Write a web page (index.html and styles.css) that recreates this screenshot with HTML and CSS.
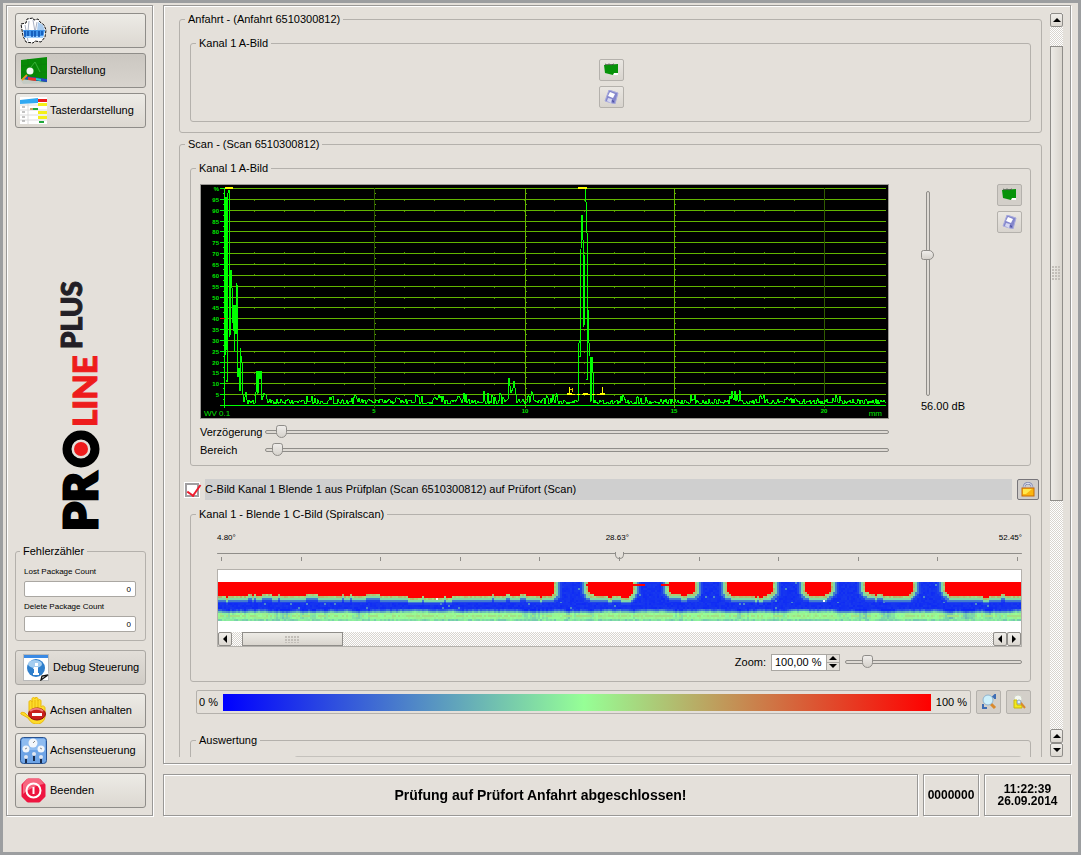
FILE: index.html
```html
<!DOCTYPE html>
<html lang="de">
<head>
    <meta charset="UTF-8">
    <meta name="viewport" content="width=device-width, initial-scale=1.0">
    <title>PROLINE PLUS</title>
    <link rel="stylesheet" href="styles.css">
</head>
<body>
    <div class="window">
        <aside class="sidebar">
            <button class="nav-btn">
                <svg width="27" height="27" viewBox="0 0 27 27">
                    <path d="M1 7l5-1 1-4 6-1 1 2 4-1 2 3 4 3 2 5-1 7-4 5-6-1-2 2-7-1-3-6-1-6z" fill="#fff" stroke="#111" stroke-dasharray="3 1"/>
                    <path d="M5 8l3 16M9 4l-1 10M13 3l3 18M17 5l-3 16" stroke="#a9b1c2" fill="none"/>
                    <path d="M18 5l5 3 2 6h-8z" fill="#a9cbee"/>
                    <path d="M3 13h22l-2 8H5z" fill="#3f94ea"/>
                    <path d="M4 20h19" stroke="#9fd0ff" stroke-width="2"/>
                    <path d="M5 14v6M8 14v5M12 14v6M15 14v6M19 14v6M22 14v4" stroke="#0b4fb0" stroke-width="1.500"/>
                </svg>
                Prüforte
            </button>
            <button class="nav-btn active">
                <svg width="27" height="27" viewBox="0 0 27 27">
                    <path d="M1 3L27 0V26L3 27 1 24z" fill="#c4cbc4"/>
                    <path d="M1 3L27 0V25L1 22z" fill="#078a07"/>
                    <path d="M1 9L27 7M1 15h26M8 2v20M15 2v21M21 1v23" stroke="#0a800a" fill="none"/>
                    <path d="M11 10l4-5 5 10" stroke="#39b339" fill="none"/>
                    <path d="M5 19l22 3v3L5 22z" fill="#2447c8"/>
                    <path d="M8 20l8 1v3l-8-1z" fill="#e33"/>
                    <path d="M16 21l5 1v2l-5-1z" fill="#2bd3c3"/>
                    <circle cx="10" cy="14" r="3.500" fill="#f1f7f1"/>
                    <path d="M7 18l-5 5" stroke="#e8922a" stroke-width="2"/>
                </svg>
                Darstellung
            </button>
            <button class="nav-btn">
                <svg width="27" height="27" viewBox="0 0 27 27">
                    <path d="M0 0h27v27H0z" fill="#fff"/>
                    <path d="M0 8h18M0 13h27M0 18h27M0 23h27M8 7v20" stroke="#dcdcdc"/>
                    <path d="M0 3l18-2v5L0 7z" fill="#31a9f2"/>
                    <path d="M18 2h9v3h-9z" fill="#ed1c1c"/>
                    <path d="M18 6h9v3h-9zM18 14h9v3h-9zM18 19h9v3h-9z" fill="#f4f01a"/>
                    <path d="M10 11h3v2h-3z" fill="#c9a56a"/>
                    <path d="M13 11h5v2h-5zM19 24h5v2h-5z" fill="#1fa83a"/>
                    <path d="M2 10h3M2 15h3M2 20h3M2 24h3" stroke="#888"/>
                </svg>
                Tasterdarstellung
            </button>

            <div class="brand">
                <svg width="80" height="260" viewBox="-20 0 80 260" role="img" aria-label="PROLINE PLUS">
                    <text class="brand-pr" transform="translate(36 255) rotate(-90)">PR</text>
                    <circle cx="20" cy="173" r="14" fill="none" stroke="#000" stroke-width="9"/>
                    <circle cx="20" cy="173" r="7" fill="#ee1c1c"/>
                    <text class="brand-line" transform="translate(36 151) rotate(-90)">LINE</text>
                    <text class="brand-plus" transform="translate(21 73) rotate(-90)">PLUS</text>
                </svg>
            </div>

            <fieldset class="counters">
                <legend>Fehlerzähler</legend>
                <label for="lost">Lost Package Count</label>
                <input type="text" id="lost" value="0">
                <label for="deleted">Delete Package Count</label>
                <input type="text" id="deleted" value="0">
            </fieldset>

            <button class="nav-btn debug">
                <svg width="27" height="27" viewBox="0 0 27 27">
                    <path d="M0 0h26v27H0z" fill="#b9b9b9"/>
                    <path d="M1 1h24v25H1z" fill="#fff"/>
                    <path d="M1 1h24v3H1z" fill="#3b8ae4"/>
                    <circle cx="13" cy="14" r="9" fill="#2f7fcc"/>
                    <ellipse cx="12" cy="10" rx="7" ry="4" fill="#a4cdf0"/>
                    <path d="M11 13h4v6h1v2h-6v-2h1v-4h-1zM12 9h3v3h-3z" fill="#fff"/>
                    <path d="M17 27l1-6 8-2z" fill="#fff"/>
                    <path d="M18 26l1-4 6-1z" fill="#eee" stroke="#111" stroke-width="1.300"/>
                </svg>
                Debug Steuerung
            </button>
            <button class="nav-btn">
                <svg width="27" height="27" viewBox="0 0 27 27">
                    <path d="M9 15V5c0-2 3-2 3 0V2c0-2 3-2 3 0v-1c0-1 3-1 3 1v2c0-2 3-2 3 0v6c1-2 4-1 4 1v8c0 5-4 8-8 8-5 0-7-3-9-6L1 17c-1-2 2-2 4-1l4 4z" fill="#fddc2b" stroke="#eab90c"/>
                    <path d="M12 4v8M15 3v9M18 4v8" stroke="#eab90c"/>
                    <ellipse cx="17" cy="17" rx="8.500" ry="6" fill="#c9201c" stroke="#8c0f0d"/>
                    <path d="M10 14c3-3 10-3 13 0" stroke="#f0817c" stroke-width="2" fill="none"/>
                    <path d="M12 16h10v3H12z" fill="#fff"/>
                </svg>
                Achsen anhalten
            </button>
            <button class="nav-btn">
                <svg width="27" height="27" viewBox="0 0 27 27">
                    <rect x="0.500" y="0.500" width="26" height="26" rx="3" fill="#6ea4e6" stroke="#29528f"/>
                    <path d="M2 2h23v11H2z" fill="#8fbcf0"/>
                    <circle cx="13" cy="6" r="4.500" fill="#f2f6fb"/>
                    <circle cx="6" cy="12" r="3.500" fill="#f2f6fb"/>
                    <circle cx="21" cy="12" r="3.500" fill="#f2f6fb"/>
                    <path d="M5 12l2-1M13 6l2-2M20 11l2 1" stroke="#888"/>
                    <path d="M6 20v6M14 17v7M21 20v6" stroke="#1b2c4c" stroke-width="2"/>
                    <circle cx="6" cy="20" r="2" fill="#dfe7f2"/>
                    <circle cx="14" cy="17" r="2" fill="#dfe7f2"/>
                    <circle cx="21" cy="20" r="2" fill="#dfe7f2"/>
                </svg>
                Achsensteuerung
            </button>
            <button class="nav-btn">
                <svg width="27" height="27" viewBox="0 0 27 27">
                    <path d="M8 3h11l5 5v11l-5 5H8l-5-5V8z" fill="#ee1540" stroke="#ee1540" stroke-width="3" stroke-linejoin="round"/>
                    <path d="M7 2h13l4 5c-7 1-15 5-21 10V7z" fill="#f7667f"/>
                    <circle cx="13.500" cy="13.500" r="7" fill="none" stroke="#fff" stroke-width="2"/>
                    <path d="M13.500 10v7" stroke="#fff" stroke-width="2"/>
                </svg>
                Beenden
            </button>
        </aside>

        <main class="main">
            <div class="panel">
                <div class="view">
                    <fieldset class="group">
                        <legend>Anfahrt - (Anfahrt 6510300812)</legend>
                        <fieldset class="inner">
                            <legend>Kanal 1 A-Bild</legend>
                            <div class="tools center">
                                <button class="tool" aria-label="A-Bild anzeigen">
                                    <svg width="15" height="14" viewBox="0 0 15 14">
                                        <path d="M0 2L14 1V10L9 12 1 10z" fill="#07930a"/>
                                        <path d="M1 1l2 1 2-1 2 1 3-1" stroke="#4c5b4c" fill="none"/>
                                        <path d="M10 10l4 0v2h-5z" fill="#fff"/>
                                    </svg>
                                </button>
                                <button class="tool" aria-label="Speichern">
                                    <svg width="15" height="14" viewBox="0 0 15 14">
                                        <path d="M5 0l9 3-3 11-10-3z" fill="#8487cc" stroke="#a9abdc"/>
                                        <path d="M6 2l5 2-2 4-5-2z" fill="#fff"/>
                                        <path d="M4 8l4 1-1 4-4-2z" fill="#d5d7f1"/>
                                        <path d="M8 10l2 1-1 2z" fill="#3f4298"/>
                                    </svg>
                                </button>
                            </div>
                        </fieldset>
                    </fieldset>

                    <fieldset class="group">
                        <legend>Scan - (Scan 6510300812)</legend>
                        <fieldset class="inner">
                            <legend>Kanal 1 A-Bild</legend>
                            <div class="ascan-row">
                                <div class="ascan-col">
                                    <svg class="ascan" id="ascan" viewBox="0 0 687 233" preserveAspectRatio="none" role="img" aria-label="A-Bild"></svg>
                                    <div class="slider-row">
                                        <label for="delay">Verzögerung</label>
                                        <input type="range" id="delay" min="0" max="1000" value="17">
                                    </div>
                                    <div class="slider-row">
                                        <label for="area">Bereich</label>
                                        <input type="range" id="area" min="0" max="1000" value="10">
                                    </div>
                                </div>
                                <div class="gain">
                                    <input type="range" class="vertical" id="gain" min="0" max="100" value="30">
                                    <label for="gain">56.00 dB</label>
                                </div>
                                <div class="tools">
                                    <button class="tool pressed" aria-label="A-Bild anzeigen">
                                        <svg width="15" height="14" viewBox="0 0 15 14">
                                            <path d="M0 2L14 1V10L9 12 1 10z" fill="#07930a"/>
                                            <path d="M1 1l2 1 2-1 2 1 3-1" stroke="#4c5b4c" fill="none"/>
                                            <path d="M10 10l4 0v2h-5z" fill="#fff"/>
                                        </svg>
                                    </button>
                                    <button class="tool" aria-label="Speichern">
                                        <svg width="15" height="14" viewBox="0 0 15 14">
                                            <path d="M5 0l9 3-3 11-10-3z" fill="#8487cc" stroke="#a9abdc"/>
                                            <path d="M6 2l5 2-2 4-5-2z" fill="#fff"/>
                                            <path d="M4 8l4 1-1 4-4-2z" fill="#d5d7f1"/>
                                            <path d="M8 10l2 1-1 2z" fill="#3f4298"/>
                                        </svg>
                                    </button>
                                </div>
                            </div>
                        </fieldset>

                        <div class="check-row">
                            <input type="checkbox" id="cbild" checked>
                            <label for="cbild">C-Bild Kanal 1 Blende 1 aus Prüfplan (Scan 6510300812) auf Prüfort (Scan)</label>
                            <button class="tool lock" aria-label="Sperren">
                                <svg width="14" height="15" viewBox="0 0 14 15">
                                    <path d="M3 8V5c0-5 8-5 8 0v3" fill="none" stroke="#7f87ad" stroke-width="2.500"/>
                                    <path d="M3 8V5c0-5 8-5 8 0v3" fill="none" stroke="#eef0fa"/>
                                    <rect x="1" y="6" width="12" height="8" fill="#fbb50f" stroke="#c56a06"/>
                                    <path d="M2 7h9l-6 5H2z" fill="#ffe94d"/>
                                </svg>
                            </button>
                        </div>

                        <fieldset class="inner cscan">
                            <legend>Kanal 1 - Blende 1 C-Bild (Spiralscan)</legend>
                            <div class="degrees">
                                <span>4.80°</span>
                                <span>28.63°</span>
                                <span>52.45°</span>
                            </div>
                            <input type="range" class="ruler" min="0" max="100" value="50" aria-label="Winkel">
                            <div class="ticks">
                                <i></i><i></i><i></i><i></i><i></i><i></i><i></i><i></i><i></i><i></i><i></i>
                            </div>
                            <div class="strip">
                                <canvas id="cscan" width="402" height="20"></canvas>
                                <div class="hscroll">
                                    <button aria-label="Links"><b class="arrow left"></b></button>
                                    <div class="hthumb"><span class="grip"></span></div>
                                    <button aria-label="Links"><b class="arrow left"></b></button>
                                    <button aria-label="Rechts"><b class="arrow right"></b></button>
                                </div>
                            </div>
                            <div class="zoom-row">
                                <label for="zoom">Zoom:</label>
                                <div class="spin">
                                    <input type="text" id="zoom" value="100,00 %">
                                    <div class="spin-btns">
                                        <button aria-label="Mehr"><b class="arrow up"></b></button>
                                        <button aria-label="Weniger"><b class="arrow down"></b></button>
                                    </div>
                                </div>
                                <input type="range" class="zoom-range" min="0" max="100" value="10" aria-label="Zoom">
                            </div>
                        </fieldset>

                        <div class="scale-row">
                            <div class="scale">
                                <span>0 %</span>
                                <div class="gradient"></div>
                                <span>100 %</span>
                            </div>
                            <button class="tool pressed" aria-label="Suchen">
                                <svg width="16" height="16" viewBox="0 0 16 16">
                                    <path d="M9 9l5 5" stroke="#d98a2e" stroke-width="3"/>
                                    <path d="M11 4l3-3v4M2 10v4h4" stroke="#3e6db4" stroke-width="2" fill="none"/>
                                    <circle cx="7" cy="6" r="5" fill="#cdf0fb" stroke="#8fb4cf"/>
                                </svg>
                            </button>
                            <button class="tool pressed" aria-label="Bereich suchen">
                                <svg width="16" height="16" viewBox="0 0 16 16">
                                    <circle cx="7" cy="5" r="4" fill="#f3f7f0" stroke="#d0d3c8"/>
                                    <path d="M3 6h3v5h5v3H3z" fill="#f3ea1c" stroke="#c9b90f"/>
                                    <path d="M9 8l5 6" stroke="#d98a2e" stroke-width="2"/>
                                    <circle cx="8" cy="8" r="2" fill="#dcefff" stroke="#8fa9bf"/>
                                </svg>
                            </button>
                        </div>

                        <fieldset class="inner result">
                            <legend>Auswertung</legend>
                            <div class="result-box"></div>
                        </fieldset>
                    </fieldset>
                </div>

                <div class="vscroll">
                    <button aria-label="Nach oben"><b class="arrow up"></b></button>
                    <div class="vthumb"><span class="grip tall"></span></div>
                    <button aria-label="Nach oben"><b class="arrow up"></b></button>
                    <button aria-label="Nach unten"><b class="arrow down"></b></button>
                </div>
            </div>

            <footer class="status">
                <div class="message">Prüfung auf Prüfort Anfahrt abgeschlossen!</div>
                <div class="code">0000000</div>
                <div class="clock">11:22:39<br>26.09.2014</div>
            </footer>
        </main>
    </div>
    <script src="script.js"></script>
</body>
</html>
```

FILE: styles.css
```css
* {
    box-sizing: border-box;
}

body {
    margin: 0;
    background-color: #e4e0da;
    font-family: "Liberation Sans", Arial, sans-serif;
    font-size: 11px;
    line-height: 13px;
    color: #000;
}

button, input {
    font: inherit;
    color: inherit;
    margin: 0;
}

svg {
    display: block;
}

.window {
    display: flex;
    gap: 10px;
    height: 100vh;
    border: 3px solid #9c9ea0;
    padding: 2px 7px 36px 3px;
}

/* Eingefasste Rahmen */
.sidebar, .panel, .status div {
    border: 1px solid #999896;
    box-shadow: 1px 1px 0 #fff, inset 1px 1px 0 #fff;
}

fieldset {
    min-width: 0;
    margin: 0;
    border: 1px solid #b4b1ac;
    border-radius: 3px;
}

legend {
    margin-left: -5px;
    padding: 0 3px;
}

/* Seitenleiste */
.sidebar {
    flex: 0 0 147px;
    display: flex;
    flex-direction: column;
    gap: 5px;
    padding: 7px 6px 7px 8px;
}

.nav-btn {
    flex: none;
    display: flex;
    align-items: center;
    gap: 3px;
    height: 35px;
    padding: 0 4px;
    border: 1px solid #8f8d89;
    border-radius: 3px;
    background: linear-gradient(#edebe6, #dcd8d1);
    white-space: nowrap;
}

.nav-btn.active {
    background: linear-gradient(#cbc7c1, #d8d4ce);
}

.nav-btn.debug {
    padding-left: 7px;
    margin-bottom: 3px;
    border-color: #aaa7a2;
    background: linear-gradient(#e2ded8, #d0ccc6);
}

.brand {
    flex: 1;
    min-height: 0;
    display: flex;
    align-items: flex-end;
    justify-content: center;
    padding-bottom: 4px;
}

.brand text {
    font-family: Lato, sans-serif;
    font-weight: 900;
}

.brand .brand-pr {
    font-size: 46px;
    stroke: #000;
    stroke-width: 3px;
}

.brand .brand-line {
    font-size: 33px;
    fill: #ee1c1c;
    stroke: #ee1c1c;
    stroke-width: 1px;
}

.brand .brand-plus {
    font-size: 28px;
    fill: #231f26;
    stroke: #231f26;
    stroke-width: 1px;
}

.counters {
    margin-bottom: 4px;
    padding: 9px 9px 1px 8px;
    font-size: 8px;
    line-height: 10px;
}

.counters legend {
    margin-left: -4px;
    font-size: 11px;
    line-height: 13px;
}

.counters label {
    display: block;
}

.counters input {
    display: block;
    width: 100%;
    height: 16px;
    margin: 4px 0 5px;
    padding: 0 4px;
    border: 1px solid #aaa7a2;
    border-radius: 2px;
    background-color: #fff;
    text-align: right;
}

.counters input:last-child {
    margin-bottom: 7px;
}

/* Hauptbereich */
.main {
    flex: 1;
    min-width: 0;
    display: flex;
    flex-direction: column;
    gap: 10px;
}

.panel {
    flex: 1;
    min-height: 0;
    display: flex;
    gap: 8px;
    padding: 7px 7px 6px 15px;
}

.view {
    flex: 1;
    min-width: 0;
    overflow: hidden;
}

.group {
    margin-bottom: 5px;
    padding: 11px 10px 10px;
}

.inner {
    padding: 9px 8px 6px 9px;
}

.inner legend {
    margin-left: -4px;
}

.tools {
    display: flex;
    flex-direction: column;
    gap: 5px;
}

.tools.center {
    align-items: center;
    padding-bottom: 7px;
}

.tool {
    flex: none;
    display: flex;
    align-items: center;
    justify-content: center;
    width: 25px;
    height: 22px;
    padding: 0;
    border: 1px solid #b4b1ac;
    border-radius: 2px;
    background: linear-gradient(#eae7e2, #d8d4ce);
}

.tool.pressed {
    background: #d3cfc9;
}

/* A-Bild */
.ascan-row {
    display: flex;
}

.ascan-col {
    flex: 1;
    min-width: 0;
}

.ascan {
    width: 100%;
    height: 235px;
    margin-bottom: 4px;
    border: 1px solid #9b9995;
    background-color: #000;
}

.ascan polyline {
    fill: none;
    stroke: #00ff00;
    stroke-width: 1px;
    shape-rendering: crispEdges;
}

.ascan text {
    font-size: 6px;
    font-weight: 700;
    fill: #00e800;
}

.ascan .unit {
    font-size: 8px;
    font-weight: 400;
}

.slider-row {
    display: flex;
    align-items: center;
    height: 18px;
}

.slider-row label {
    width: 65px;
}

.slider-row input {
    flex: 1;
}

.gain {
    width: 108px;
    padding: 7px 0 0 32px;
}

.gain label {
    display: block;
    margin-top: 4px;
}

input[type="range"] {
    -webkit-appearance: none;
    appearance: none;
    min-width: 0;
    height: 14px;
    background: none;
}

input[type="range"]::-webkit-slider-runnable-track {
    height: 4px;
    border: 1px solid #8f8d89;
    border-radius: 2px;
    background-color: #dedad4;
}

input[type="range"]::-webkit-slider-thumb {
    -webkit-appearance: none;
    width: 11px;
    height: 13px;
    margin-top: -6px;
    border: 1px solid #8f8d89;
    border-radius: 3px 3px 6px 6px;
    background: linear-gradient(#efedea, #d6d2cc);
}

input[type="range"].vertical {
    display: block;
    writing-mode: vertical-lr;
    width: 13px;
    height: 205px;
}

input[type="range"].vertical::-webkit-slider-runnable-track {
    width: 4px;
    height: 100%;
}

input[type="range"].vertical::-webkit-slider-thumb {
    width: 13px;
    height: 10px;
    margin: 0 0 0 -6px;
    border-radius: 3px 6px 6px 3px;
}

/* C-Bild */
.check-row {
    display: flex;
    gap: 5px;
    margin: 13px -8px 8px -6px;
}

.check-row input {
    -webkit-appearance: none;
    appearance: none;
    position: relative;
    width: 16px;
    height: 16px;
    margin-top: 3px;
    border: 1px solid #fff;
    background-color: #fff;
    box-shadow: inset 0 0 0 2px #a09ea0;
}

.check-row input:checked::before {
    content: "";
    position: absolute;
    left: 5px;
    top: -1px;
    width: 6px;
    height: 12px;
    border: solid #ee1c2e;
    border-width: 0 2px 2px 0;
    transform: rotate(35deg);
}

.check-row label {
    flex: 1;
    line-height: 21px;
    background-color: #cfcfcf;
}

.tool.lock {
    width: 22px;
    height: 21px;
    border-color: #77757a;
    background: #d0cdca;
}

.cscan {
    padding: 11px 8px 10px 26px;
}

.cscan legend {
    margin-left: -21px;
}

.degrees {
    display: flex;
    justify-content: space-between;
    font-size: 8px;
    line-height: 12px;
}

.ruler {
    display: block;
    width: 100%;
    margin-top: 2px;
}

.cscan .ruler::-webkit-slider-runnable-track {
    height: 1px;
    border: 0;
    background-color: #8f8d89;
}

.cscan .ruler::-webkit-slider-thumb {
    width: 9px;
    height: 7px;
    margin-top: -1px;
    border-top: 0;
    border-radius: 0 0 5px 5px;
    background: #e4e0da;
}

.ticks {
    display: flex;
    justify-content: space-between;
    margin: -3px 4px 8px;
}

.ticks i {
    width: 1px;
    height: 4px;
    background-color: #8f8d89;
}

.strip {
    padding-top: 12px;
    border: 1px solid #b4b1ac;
    background-color: #fff;
}

#cscan {
    display: block;
    width: 100%;
    height: 39px;
    image-rendering: pixelated;
}

.hscroll, .vscroll {
    display: flex;
    background: repeating-conic-gradient(#d9d5cf 0 25%, #fff 0 50%) 0 0 / 2px 2px;
}

.hscroll {
    height: 14px;
    margin-top: 11px;
}

.hscroll button, .vscroll button {
    flex: none;
    display: flex;
    align-items: center;
    justify-content: center;
    width: 14px;
    height: 14px;
    padding: 0;
    border: 1px solid #8f8d89;
    border-radius: 2px;
    background: linear-gradient(#f0eeea, #dcd8d1);
}

.hthumb, .vthumb {
    display: flex;
    align-items: center;
    justify-content: center;
    border: 1px solid #8f8d89;
}

.hthumb {
    width: 101px;
    margin: 0 auto 0 10px;
    background: linear-gradient(#edebe6, #d9d5ce);
}

.grip {
    width: 15px;
    height: 7px;
    background: radial-gradient(circle at 1px 1px, #c2beb8 1px, transparent 1px) 0 0 / 3px 3px;
}

.grip.tall {
    width: 9px;
    height: 15px;
}

.arrow {
    border: 4px solid transparent;
}

.arrow.up {
    border-top: 0;
    border-bottom-color: #000;
}

.arrow.down {
    border-bottom: 0;
    border-top-color: #000;
}

.arrow.left {
    border-left: 0;
    border-right-color: #000;
}

.arrow.right {
    border-right: 0;
    border-left-color: #000;
}

.zoom-row {
    display: flex;
    align-items: center;
    justify-content: flex-end;
    height: 18px;
    margin-top: 6px;
}

.spin {
    display: flex;
    width: 69px;
    height: 17px;
    margin: 0 5px;
    border: 1px solid #aaa7a2;
}

.spin input {
    flex: 1;
    min-width: 0;
    padding: 0 3px;
    border: 0;
    background-color: #fff;
}

.spin-btns {
    display: flex;
    flex-direction: column;
    width: 13px;
}

.spin-btns button {
    flex: 1;
    display: flex;
    align-items: center;
    justify-content: center;
    padding: 0;
    border: 0;
    border-left: 1px solid #aaa7a2;
    background: #e4e0da;
}

.spin-btns button + button {
    border-top: 1px solid #aaa7a2;
}

.zoom-range {
    width: 177px;
}

/* Farbskala */
.scale-row {
    display: flex;
    gap: 5px;
    margin: 8px 0 20px 6px;
}

.scale-row .tool {
    height: 24px;
}

.scale {
    flex: 1;
    display: flex;
    align-items: center;
    gap: 5px;
    height: 24px;
    padding: 0 3px 0 2px;
    border: 1px solid #b4b1ac;
    border-radius: 2px;
}

.gradient {
    flex: 1;
    height: 17px;
    background: linear-gradient(90deg, #0000ff, #96ff96 51%, #ff0000);
}

.result-box {
    height: 80px;
    margin-left: 94px;
    border: 1px solid #c4c1bc;
    border-radius: 3px;
}

.vscroll {
    flex: 0 0 13px;
    flex-direction: column;
}

.vscroll button {
    width: 13px;
}

.vthumb {
    height: 455px;
    margin: 19px 0 auto;
    background: linear-gradient(90deg, #edebe6, #d9d5ce);
}

/* Statuszeile */
.status {
    display: flex;
    gap: 5px;
    height: 42px;
    font-weight: 700;
    text-align: center;
}

.status div {
    display: flex;
    align-items: center;
    justify-content: center;
}

.status .message {
    flex: 1;
    font-size: 14px;
}

.status .code {
    width: 56px;
    font-size: 12px;
}

.status .clock {
    width: 87px;
    font-size: 12px;
    line-height: 12px;
}
```

FILE: script.js
```js
// fester Startwert, damit das Rauschen immer gleich aussieht
let seed = 812;
function rnd() {
    seed = (seed * 16807) % 2147483647;
    return seed / 2147483647;
}

const ascan = document.getElementById('ascan');

function add(name, attrs, text) {
    const el = document.createElementNS('http://www.w3.org/2000/svg', name);
    for (const key in attrs) el.setAttribute(key, attrs[key]);
    if (text) el.textContent = text;
    ascan.appendChild(el);
}

function rect(x, y, width, height, fill) {
    add('rect', { x, y, width, height, fill });
}

const LEFT = 23, RIGHT = 685, TOP = 3, BASE = 220;
const majors = [173, 324, 473, 623];

// Raster
for (let i = 0; i <= 20; i++) {
    const y = Math.round(TOP + i * 10.85);
    rect(LEFT - 4, y, i === 20 ? RIGHT - LEFT + 4 : 4, 1, '#00ff00');
    if (i < 20) {
        rect(LEFT, y, RIGHT - LEFT, 1, '#62b500');
        add('text', { x: 18, y: y + 3, 'text-anchor': 'end' }, i === 0 ? '%' : String(100 - i * 5));
        rect(LEFT - 1, y + 5, 1, 1, '#00ff00');
        majors.slice(0, 3).forEach(x => rect(x + 1, y + 5, 1, 1, '#62b500'));
        if (i > 0 && ![3, 4, 5, 12, 14].includes(i)) {
            for (let x = 53; x < 610; x += 30) rect(x, i > 5 && i < 9 ? y - 1 : y + 1, 1, 1, '#4a8a00');
        }
    }
}
majors.forEach((x, i) => {
    rect(x, TOP, 1, BASE - TOP + 3, i % 2 && i < 3 || i === 2 ? '#62b500' : '#2f5c00');
    add('text', { x, y: BASE + 8, 'text-anchor': 'middle' }, String((i + 1) * 5));
});
rect(LEFT, TOP, 1, BASE - TOP + 3, '#00ff00');
rect(LEFT - 4, 133, 5, 1, '#ff0000');
add('text', { x: 3, y: 231, class: 'unit' }, 'WV 0.1');
add('text', { x: 681, y: 231, class: 'unit', 'text-anchor': 'end' }, 'mm');

// Signal: Rauschen mit einzelnen Echos
const bumps = [
    [110, 9], [133, 8], [155, 9], [195, 8], [218, 10], [238, 10], [260, 11], [287, 14], [297, 12], [330, 14], [345, 11],
    [352, 14], [424, 10], [441, 8], [490, 9], [534, 15], [559, 9], [591, 8], [620, 8], [635, 9], [648, 8]
];

function noise(from, to) {
    const out = [];
    for (let x = from; x < to; x++) {
        let amp = 5;
        bumps.forEach(p => { if (Math.abs(x - p[0]) < 6) amp = p[1]; });
        out.push([x, BASE - 1 - Math.pow(rnd(), 1.3) * amp]);
    }
    return out;
}

const trace = [
    [24, 170], [24, 15], [25, 165], [26, 15], [26, 197], [27, 8], [28, 5], [28, 147], [29, 152], [30, 85], [31, 103], [31, 138],
    [32, 120], [33, 146], [33, 167], [34, 120], [35, 149], [35, 98], [36, 100], [36, 181], [37, 192], [38, 183], [39, 206],
    [39, 163], [41, 178], [41, 203], [43, 217], [45, 207], [46, 215],
    ...noise(47, 55),
    [55, 207], [56, 186], [57, 209], [58, 186], [59, 194], [60, 186], [61, 215], [63, 208], [65, 210], [67, 218],
    ...noise(68, 306),
    [307, 214], [308, 193], [310, 208], [312, 203], [313, 196], [315, 210],
    ...noise(316, 376),
    [377, 217], [378, 158], [379, 155], [379, 172], [380, 64], [381, 30], [382, 55], [382, 95], [383, 142], [384, 70], [384, 3],
    [385, 17], [386, 48], [386, 195], [387, 124], [388, 158], [389, 171], [390, 217], [391, 172], [392, 187], [392, 215],
    ...noise(393, 686)
];
add('polyline', { points: trace.map(p => p.join(',')).join(' ') });
rect(24, 12, 2, 153, '#00ff00');

// Blenden
rect(24, 2, 8, 2, '#ffff00');
rect(377, 2, 9, 2, '#ffff00');
for (let x = 366; x < 402; x += 5) rect(x, 209, 3, 1, '#ffff00');
[368, 401].forEach(x => {
    rect(x, 202, 1, 8, '#ffff00');
    rect(x - 2, 208, 5, 2, '#ffff00');
});
rect(382, 208, 5, 2, '#ffff00');
rect(369, 204, 3, 1, '#e0c000');
rect(371, 203, 1, 4, '#e0c000');

// C-Bild
const canvas = document.getElementById('cscan');
const ctx = canvas.getContext('2d');
const zones = [[-30, 336], [369, 415], [450, 477], [509, 555], [587, 614], [647, 695], [727, 840]];

function color(v) {
    v = Math.max(0.04, Math.min(1, v));
    if (v < 0.5) {
        const t = v * 2;
        return [150 * t, 20 + 235 * t, 255 - 105 * t];
    }
    const t = (v - 0.5) * 2;
    return [150 + 105 * t, 255 * (1 - t), 150 * (1 - t)];
}

// Abstand zur abgerundeten roten Zone
function distance(x, y, a, b, depth) {
    const r = 7;
    const dx = Math.abs(x - (a + b) / 2) - (b - a) / 2 + r;
    const dy = y - depth + r;
    return Math.hypot(Math.max(dx, 0), Math.max(dy, 0)) + Math.min(Math.max(dx, dy), 0) - r;
}

let wobble = 0;
let streak = 0;
for (let cx = 0; cx < 402; cx++) {
    wobble = wobble * 0.85 + (rnd() - 0.5) * 1.8;
    streak = streak * 0.8 + (rnd() - 0.5) * 0.14;
    for (let cy = 0; cy < 20; cy++) {
        const x = cx * 2, y = cy * 2;
        let d = 99;
        zones.forEach(z => { d = Math.min(d, distance(x, y, z[0], z[1], 13 + wobble)); });
        let v = 0.05 + rnd() * 0.03;
        if (d < 0) v = 1;
        else if (d < 2) v = 0.56 + rnd() * 0.1;
        else if (d < 4) v = 0.42;
        else if (d < 6) v = 0.22;
        else if (d < 8) v = 0.1;
        if (rnd() > 0.985 && v < 0.15) v = 0.25;
        if (cy === 14) v = 0.12 + streak;
        if (cy === 15) v = 0.32 + streak;
        if (cy > 15) v = 0.48 + Math.min(streak, 0.02) * 0.8 + rnd() * 0.04;
        if (cy === 17 && rnd() > 0.5) v = 0.56;
        if (cy === 19) v = 0.38 + rnd() * 0.1;
        ctx.fillStyle = `rgb(${color(v).join(',')})`;
        ctx.fillRect(cx, cy, 1, 1);
    }
}
ctx.fillStyle = '#ff0000';
ctx.fillRect(184, 1, 6, 1);
ctx.fillRect(207, 1, 7, 1);
ctx.fillRect(222, 1, 6, 1);
ctx.fillStyle = '#ffffff';
ctx.fillRect(109, 8, 1, 1);
ctx.fillRect(303, 9, 1, 1);
```
